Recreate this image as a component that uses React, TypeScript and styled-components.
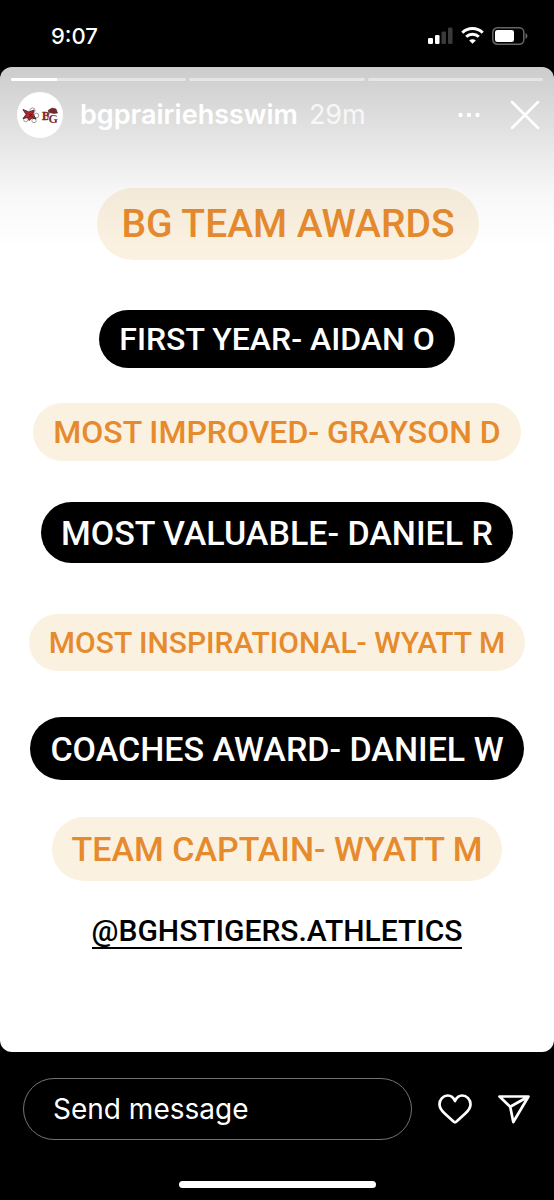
import React from "react";
import styled, { createGlobalStyle } from "styled-components";

const GlobalStyle = createGlobalStyle`
  *, *::before, *::after { box-sizing: border-box; }
  body { margin: 0; background: #000; font-family: Inter, "Liberation Sans", sans-serif; }
  button { padding: 0; border: 0; background: none; color: inherit; cursor: pointer; }
`;

const Screen = styled.div`
  display: flex;
  flex-direction: column;
  min-height: 100vh;
  background: #000;
  color: #fff;
`;

const StatusBar = styled.header`
  display: flex;
  align-items: center;
  justify-content: space-between;
  height: 67px;
  padding: 4px 26px 0 51px;
`;

const Clock = styled.time`
  font-size: 22px;
  line-height: 28px;
  font-weight: 500;
`;

const StatusIcons = styled.div`
  display: flex;
  align-items: center;
  gap: 8px;
  svg { display: block; }
`;

const Story = styled.main`
  position: relative;
  display: flex;
  flex-direction: column;
  flex: 1;
  padding: 11px 11px 32px;
  border-radius: 12px;
  overflow: hidden;
  background: #fff;

  &::after {
    content: "";
    position: absolute;
    inset: 0 0 auto;
    height: 180px;
    background: linear-gradient(rgba(0, 0, 0, 0.2), rgba(0, 0, 0, 0.08) 50%, rgba(0, 0, 0, 0.03) 70%, rgba(0, 0, 0, 0));
    pointer-events: none;
  }
`;

const Progress = styled.div`
  position: relative;
  z-index: 1;
  display: flex;
  gap: 3px;
`;

const Segment = styled.div`
  flex: 1;
  height: 3px;
  border-radius: 2px;
  overflow: hidden;
  background: rgba(255, 255, 255, 0.45);
`;

const SegmentFill = styled.div`
  height: 100%;
  background: #fff;
`;

const AccountRow = styled.div`
  position: relative;
  z-index: 1;
  display: flex;
  align-items: center;
  height: 46px;
  margin-top: 11px;
  padding: 0 3px 0 6px;
`;

const Avatar = styled.svg`
  display: block;
  margin-right: 17px;
`;

const Account = styled.a`
  color: #fff;
  font-size: 27px;
  line-height: 34px;
  font-weight: 600;
  text-decoration: none;
`;

const Age = styled.span`
  margin-left: 11px;
  color: rgba(255, 255, 255, 0.8);
  font-size: 27px;
  line-height: 34px;
`;

const IconButton = styled.button`
  display: flex;
  align-items: center;
  justify-content: center;
`;

const HeaderActions = styled.div`
  display: flex;
  gap: 30px;
  margin-left: auto;
`;

const Awards = styled.ul`
  display: flex;
  flex-direction: column;
  align-items: center;
  margin: 42px 0 0;
  padding: 0;
  list-style: none;
  font-family: Roboto, "Liberation Sans", sans-serif;
`;

type Tone = "cream" | "black";

const Pill = styled.li<{ $tone: Tone; $size: number; $height: number; $gap: number }>`
  display: flex;
  align-items: center;
  height: ${(p) => p.$height}px;
  margin-top: ${(p) => p.$gap}px;
  padding: 0 20px;
  border-radius: 32px;
  background: ${(p) => (p.$tone === "cream" ? "#fbf1e0" : "#000")};
  color: ${(p) => (p.$tone === "cream" ? "#e68a2e" : "#fff")};
  font-size: ${(p) => p.$size}px;
  font-weight: 500;
  white-space: nowrap;
`;

const Title = styled.h1`
  display: flex;
  align-items: center;
  align-self: center;
  height: 72px;
  margin: 50px 0 0 22px;
  padding: 0 24px;
  border-radius: 36px;
  background: #fbf1e0;
  color: #e68a2e;
  font-family: Roboto, "Liberation Sans", sans-serif;
  font-size: 39px;
  font-weight: 500;
  white-space: nowrap;
`;

const Mention = styled.a`
  align-self: center;
  margin-top: 34px;
  border-bottom: 2px solid #000;
  color: #000;
  font-family: Roboto, "Liberation Sans", sans-serif;
  font-size: 30px;
  line-height: 32px;
  font-weight: 500;
  text-decoration: none;
`;

const Composer = styled.form`
  display: flex;
  align-items: center;
  padding: 26px 24px 0 23px;
`;

const MessageInput = styled.input`
  flex: 1;
  min-width: 0;
  height: 62px;
  padding: 0 29px;
  border: 1px solid #737373;
  border-radius: 31px;
  background: transparent;
  color: #fff;
  font-family: inherit;
  font-size: 28px;
  &::placeholder { color: #fff; opacity: 1; }
`;

const ComposerActions = styled.div`
  display: flex;
  align-items: center;
  gap: 26px;
  margin-left: 26px;
`;

const HomeIndicator = styled.div`
  width: 197px;
  height: 7px;
  margin: 41px auto 12px;
  border-radius: 4px;
  background: #fff;
`;

const awards: { text: string; tone: Tone; size: number; height: number; gap: number }[] = [
  { text: "FIRST YEAR- AIDAN O", tone: "black", size: 32, height: 58, gap: 8 },
  { text: "MOST IMPROVED- GRAYSON D", tone: "cream", size: 32, height: 58, gap: 35 },
  { text: "MOST VALUABLE- DANIEL R", tone: "black", size: 34, height: 61, gap: 41 },
  { text: "MOST INSPIRATIONAL- WYATT M", tone: "cream", size: 30, height: 57, gap: 51 },
  { text: "COACHES AWARD- DANIEL W", tone: "black", size: 34, height: 63, gap: 46 },
  { text: "TEAM CAPTAIN- WYATT M", tone: "cream", size: 34, height: 64, gap: 37 },
];

const progress = [26, 0, 0];

export default function App() {
  return (
    <Screen>
      <GlobalStyle />
      <StatusBar>
        <Clock>9:07</Clock>
        <StatusIcons>
          <svg width="25" height="17" viewBox="0 0 25 17" fill="#fff" aria-hidden="true">
            <rect x="0" y="11" width="5" height="6" rx="1.3" />
            <rect x="7" y="8" width="4.5" height="9" rx="1.3" />
            <rect x="13.5" y="4.5" width="4.5" height="12.5" rx="1.3" fill="#3a3a3a" />
            <rect x="20" y="0.5" width="4.5" height="16.5" rx="1.3" fill="#3a3a3a" />
          </svg>
          <svg width="23" height="17" viewBox="0 0 23 17" fill="none" stroke="#fff" strokeWidth="3" aria-hidden="true">
            <path d="M1.3 5.7a14.6 14.6 0 0 1 20.4 0" />
            <path d="M5.2 9.8a9 9 0 0 1 12.6 0" />
            <path d="M11.5 16.8 8.2 13.5a4.7 4.7 0 0 1 6.6 0z" fill="#fff" stroke="none" />
          </svg>
          <svg width="36" height="18" viewBox="0 0 36 18" aria-hidden="true">
            <rect x="0.8" y="0.8" width="31" height="16.4" rx="4.5" fill="none" stroke="#666" strokeWidth="1.5" />
            <rect x="3" y="3" width="19" height="12" rx="2.3" fill="#fff" />
            <path d="M33.5 6q2 1 2 3t-2 3z" fill="#666" />
          </svg>
        </StatusIcons>
      </StatusBar>

      <Story>
        <Progress>
          {progress.map((value, i) => (
            <Segment key={i}>
              <SegmentFill style={{ width: `${value}%` }} />
            </Segment>
          ))}
        </Progress>
        <AccountRow>
          <Avatar width="46" height="46" viewBox="0 0 46 46" aria-hidden="true">
            <circle cx="23" cy="23" r="23" fill="#fff" />
            <g fill="#fff" stroke="#8a8082" strokeWidth="0.8">
              <circle cx="15.5" cy="18.5" r="2.6" />
              <circle cx="19.5" cy="23.5" r="2.3" />
              <circle cx="8.8" cy="27.5" r="2.2" />
              <circle cx="17" cy="28.5" r="2.2" />
            </g>
            <path d="m6 17.5 6 2.5 5-2-1 4 3 5-4-1-3 2.5-1-3-5 1 3-4z" fill="#b3272f" stroke="#4b2323" strokeWidth="0.9" />
            <path d="m11.5 21.500 4.500 4m-1-4-3 4" stroke="#4b1a1c" strokeWidth="0.9" />
            <path d="m31 18.500 4-2.500 4 1 1.500 4-3.500 0.500-5-1z" fill="#7d2529" stroke="#4b2a28" strokeWidth="0.6" />
            <g fill="#7a2a2c" stroke="#7a2a2c" strokeWidth="0.4" fontFamily="Liberation Serif, serif" fontSize="12" fontWeight="700">
              <text x="25" y="27.500">B</text>
              <text x="31.500" y="30.500" stroke="#fff" strokeWidth="1.500" paintOrder="stroke">G</text>
            </g>
          </Avatar>
          <Account href="#profile">bgprairiehsswim</Account>
          <Age>29m</Age>
          <HeaderActions>
            <IconButton type="button" aria-label="More options">
              <svg width="22" height="6" viewBox="0 0 22 6" fill="#fff">
                <circle cx="2.5" cy="3" r="2.2" />
                <circle cx="11" cy="3" r="2.2" />
                <circle cx="19.5" cy="3" r="2.2" />
              </svg>
            </IconButton>
            <IconButton type="button" aria-label="Close">
              <svg width="30" height="30" viewBox="0 0 30 30" stroke="#fff" strokeWidth="2.5" strokeLinecap="round">
                <path d="m2 2 26 26M28 2 2 28" />
              </svg>
            </IconButton>
          </HeaderActions>
        </AccountRow>

        <Title>BG TEAM AWARDS</Title>
        <Awards>
          {awards.map((a) => (
            <Pill key={a.text} $tone={a.tone} $size={a.size} $height={a.height} $gap={a.gap}>
              {a.text}
            </Pill>
          ))}
        </Awards>
        <Mention href="#bghstigers">@BGHSTIGERS.ATHLETICS</Mention>
      </Story>

      <Composer>
        <MessageInput type="text" placeholder="Send message" aria-label="Send message" />
        <ComposerActions>
          <IconButton type="button" aria-label="Like">
            <svg width="34" height="30" viewBox="0 0 34 30" fill="none" stroke="#fff" strokeWidth="2.7" strokeLinejoin="round">
              <path d="M17 7C15.5 3.500 13 1.500 9.800 1.500c-4.600 0-8.300 3.900-8.300 8.800 0 4 2.200 6.600 5.200 9.300l8.800 8q1.500 1.300 3 0l8.800-8c3-2.700 5.200-5.300 5.200-9.300 0-4.900-3.700-8.800-8.300-8.800-3.200 0-5.700 2-7.200 5.500z" />
            </svg>
          </IconButton>
          <IconButton type="submit" aria-label="Share">
            <svg width="32" height="30" viewBox="0 0 32 30" fill="none" stroke="#fff" strokeWidth="2.7" strokeLinejoin="round">
              <path d="M1.5 2.500h29l-15.200 25.500-3.100-15.200zM12.200 12.800l18.300-10.300" />
            </svg>
          </IconButton>
        </ComposerActions>
      </Composer>
      <HomeIndicator />
    </Screen>
  );
}
